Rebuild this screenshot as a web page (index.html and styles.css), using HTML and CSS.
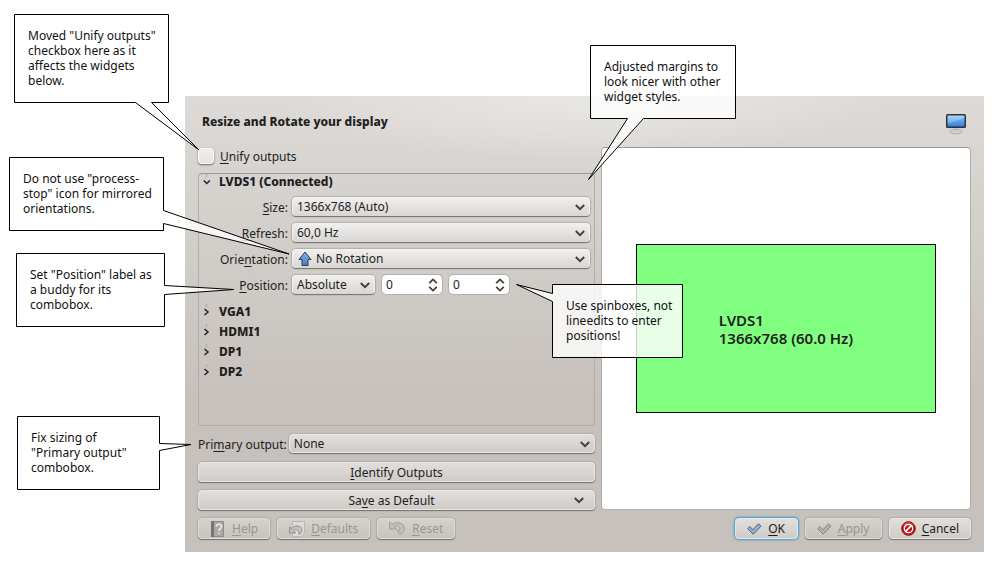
FILE: index.html
```html
<!DOCTYPE html>
<html lang="en">
<head>
<meta charset="utf-8">
<title>Resize and Rotate your display</title>
<link rel="stylesheet" href="styles.css">
</head>
<body>
<svg class="defs" width="0" height="0" aria-hidden="true">
  <defs>
    <symbol id="down" viewBox="0 0 10 7"><path d="M.8 1 5 5.200 9.200 1" fill="none" stroke="#44413f" stroke-width="2"/></symbol>
    <symbol id="spin" viewBox="0 0 10 14"><path d="M1.200 5.200 5 1.400 8.800 5.200M1.200 8.800 5 12.600 8.800 8.800" fill="none" stroke="#44413f" stroke-width="1.800"/></symbol>
    <symbol id="twig" viewBox="0 0 8 14"><path d="M3.500 0V3" stroke="#aaa6a3"/><path d="M1.500 5 5 8 1.500 11" fill="none" stroke="#222" stroke-width="1.500"/></symbol>
    <symbol id="twig-open" viewBox="0 0 8 14"><path d="M3.500 0V3" stroke="#aaa6a3"/><path d="M.8 6.500 3.800 9.500 6.800 6.500" fill="none" stroke="#222" stroke-width="1.500"/></symbol>
    <symbol id="check" viewBox="0 0 15 12"><path d="M2.800 3.600 6 6.800 11.400 .8 14 3.200 6.200 11.200 .7 5.700Z" stroke-linejoin="round"/></symbol>
    <linearGradient id="blue" x1="0" y1="0" x2="0" y2="1"><stop offset="0" stop-color="#8db0dc"/><stop offset="1" stop-color="#4a7ab5"/></linearGradient>
    <linearGradient id="screen" x1="0" y1="0" x2="0" y2="1"><stop offset="0" stop-color="#8cc9fb"/><stop offset="1" stop-color="#2d80dc"/></linearGradient>
    <linearGradient id="red" x1="0" y1="0" x2="0" y2="1"><stop offset="0" stop-color="#d94d4d"/><stop offset=".5" stop-color="#b51414"/><stop offset="1" stop-color="#d51c1c"/></linearGradient>
  </defs>
</svg>

<main class="dialog">
  <header class="head">
    <h1>Resize and Rotate your display</h1>
    <svg class="monitor" width="22" height="22" viewBox="0 0 22 22" aria-hidden="true">
      <ellipse cx="11" cy="18.500" rx="6.500" ry="2.300" fill="#d4d2d0" stroke="#b1aeab"/>
      <path d="M9 15h4v3H9z" fill="#c3c0bd"/>
      <rect x="1" y="1" width="20" height="14" rx="1.500" fill="#303030"/>
      <rect x="2.500" y="2.500" width="17" height="11" fill="url(#screen)"/>
      <path d="M2.500 2.500h17v2L2.500 11z" fill="#fff" opacity=".22"/>
    </svg>
  </header>

  <div class="columns">
    <section class="settings">
      <label class="unify"><input type="checkbox"><span><u>U</u>nify outputs</span></label>

      <div class="outputs">
        <button class="node" type="button"><svg width="8" height="14"><use href="#twig-open"/></svg>LVDS1 (Connected)</button>
        <div class="form">
          <label for="size"><u>S</u>ize:</label>
          <div class="combo"><select id="size"><option>1366x768 (Auto)</option></select><svg width="10" height="7"><use href="#down"/></svg></div>
          <label for="refresh"><u>R</u>efresh:</label>
          <div class="combo"><select id="refresh"><option>60,0 Hz</option></select><svg width="10" height="7"><use href="#down"/></svg></div>
          <label for="orientation">Orie<u>n</u>tation:</label>
          <div class="combo with-icon">
            <svg class="up" width="14" height="16" viewBox="0 0 14 16"><path d="M7 1 13 8.500H10V14.500H4V8.500H1Z" fill="url(#blue)" stroke="#1f3f6b" stroke-linejoin="round"/></svg>
            <select id="orientation"><option>No Rotation</option></select><svg width="10" height="7"><use href="#down"/></svg>
          </div>
          <label for="position"><u>P</u>osition:</label>
          <div class="position">
            <div class="combo"><select id="position"><option>Absolute</option></select><svg width="10" height="7"><use href="#down"/></svg></div>
            <div class="spinbox"><input type="number" value="0" aria-label="X"><svg width="10" height="14"><use href="#spin"/></svg></div>
            <div class="spinbox"><input type="number" value="0" aria-label="Y"><svg width="10" height="14"><use href="#spin"/></svg></div>
          </div>
        </div>
        <button class="node" type="button"><svg width="8" height="14"><use href="#twig"/></svg>VGA1</button>
        <button class="node" type="button"><svg width="8" height="14"><use href="#twig"/></svg>HDMI1</button>
        <button class="node" type="button"><svg width="8" height="14"><use href="#twig"/></svg>DP1</button>
        <button class="node" type="button"><svg width="8" height="14"><use href="#twig"/></svg>DP2</button>
      </div>

      <div class="primary">
        <label for="primary">Pri<u>m</u>ary output:</label>
        <div class="combo"><select id="primary"><option>None</option></select><svg width="10" height="7"><use href="#down"/></svg></div>
      </div>
      <button class="wide" type="button"><span><u>I</u>dentify Outputs</span></button>
      <button class="wide menu" type="button"><span>Sa<u>v</u>e as Default</span><svg width="10" height="7"><use href="#down"/></svg></button>
    </section>

    <section class="preview">
      <div class="screen"><p>LVDS1<br>1366x768 (60.0 Hz)</p></div>
    </section>
  </div>

  <footer class="actions">
    <button type="button" disabled>
      <svg width="16" height="16" viewBox="0 0 16 16"><path d="M1.500 .5h12v15h-12z" fill="#aaa8a4" stroke="#8d8a87"/><path d="M1 0h3v16H1z" fill="#777572"/><path d="M6.500 5.500C6.500 2.500 11.500 2.500 11.500 5.500 11.500 7.500 9 7.500 9 10M9 11.500V13" fill="none" stroke="#ecebe8" stroke-width="1.600"/></svg>
      <span><u>H</u>elp</span></button>
    <button type="button" disabled>
      <svg width="16" height="16" viewBox="0 0 16 16"><path d="M3.500 .5h12v11l-3 4h-9z" fill="#dedcd9" stroke="#bbb8b4"/><path d="M.6 6v6h6L4.600 10C7 7.500 10.500 8.500 10 13.500 14.500 11 13.500 5.500 9 5 6.500 4.700 4.500 5.600 2.800 7.800Z" fill="#c5c3bf" stroke="#8f8c88" stroke-linejoin="round"/></svg>
      <span><u>D</u>efaults</span></button>
    <button type="button" disabled>
      <svg width="17" height="16" viewBox="0 0 17 16"><path d="M.6 1v7h7L5.400 5.900C8.500 3.500 12 5.500 10.500 9.500L8 9.500 11 13.500C17 11 16.500 3.500 11 2 7.500 1.200 5 2 3 3.600Z" fill="#c3c0bc" stroke="#a19e9a" stroke-linejoin="round"/></svg>
      <span><u>R</u>eset</span></button>
    <button class="ok" type="button"><svg width="15" height="12" fill="#93b3d6" stroke="#4a607c"><use href="#check"/></svg><span><u>O</u>K</span></button>
    <button type="button" disabled><svg width="15" height="12" fill="#b3b1ae" stroke="#858380"><use href="#check"/></svg><span><u>A</u>pply</span></button>
    <button type="button">
      <svg width="15" height="15" viewBox="0 0 15 15"><circle cx="7.500" cy="7.500" r="6.800" fill="url(#red)" stroke="#8c0808"/><circle cx="7.500" cy="7.500" r="4.200" fill="none" stroke="#fff" stroke-width="1.300"/><path d="M4.600 10.400 10.400 4.600" stroke="#fff" stroke-width="1.500"/></svg>
      <span><u>C</u>ancel</span></button>
  </footer>
</main>

<aside class="note unify-note">
  <svg width="156" height="90"><path d="M.5 .5H154.500V88.500H137.500L185 136 121.500 88.500H.5Z"/></svg>
  <p>Moved "Unify outputs"<br>checkbox here as it<br>affects the widgets<br>below.</p>
</aside>
<aside class="note orientation-note">
  <svg width="156" height="75"><path d="M.5 .5H154.500V53.500L280 97 154.500 66.500V73.500H.5Z"/></svg>
  <p>Do not use "process-<br>stop" icon for mirrored<br>orientations.</p>
</aside>
<aside class="note position-note">
  <svg width="150" height="75"><path d="M.5 .5H148.500V32.500L218 36.500 148.500 41.500V73.500H.5Z"/></svg>
  <p>Set "Position" label as<br>a buddy for its<br>combobox.</p>
</aside>
<aside class="note primary-note">
  <svg width="144" height="75"><path d="M.5 .5H142.500V27.500L174 28.500 142.500 34.500V73.500H.5Z"/></svg>
  <p>Fix sizing of<br>"Primary output"<br>combobox.</p>
</aside>
<aside class="note margins-note">
  <svg width="147" height="75"><path d="M.5 .5H145.500V73.500H53.500L-1.500 134.500 37.500 73.500H.5Z"/></svg>
  <p>Adjusted margins to<br>look nicer with other<br>widget styles.</p>
</aside>
<aside class="note spin-note">
  <svg width="132" height="75"><path d="M.5 .5H130.500V73.500H.5V17.500L-35.500 .5 .5 9.500Z"/></svg>
  <p>Use spinboxes, not<br>lineedits to enter<br>positions!</p>
</aside>
</body>
</html>
```
FILE: styles.css
```css
* { box-sizing: border-box; }

body {
  position: relative;
  display: flex;
  flex-direction: column;
  min-height: 100vh;
  margin: 0;
  padding: 96px 12px 15px 185px;
  background: #fff;
  color: #221e1e;
  font: 12px/15px "Noto Sans", "Open Sans", sans-serif;
}

.defs { position: absolute; }

u { text-underline-offset: 2px; text-decoration-thickness: 1px; }

button, input, select { font: inherit; color: inherit; }

.dialog {
  flex: 1;
  display: flex;
  flex-direction: column;
  padding: 0 13px 13px;
  background:
    radial-gradient(ellipse 300px 64px at 50% 0, #e9e7e5, transparent),
    linear-gradient(#dddad7, #c6c1bc 300px);
}

.head {
  display: flex;
  align-items: center;
  justify-content: space-between;
  height: 51px;
  padding: 0 4px;
}

h1 { margin: 0; font-size: 12px; font-weight: 800; }

.monitor { margin-top: 4px; }

.columns {
  flex: 1;
  display: grid;
  grid-template-columns: 397fr 370fr;
  gap: 6px;
}

.settings { display: flex; flex-direction: column; gap: 8px; }

.unify { display: flex; align-items: center; gap: 6px; height: 18px; }

.unify input {
  appearance: none;
  width: 16px;
  height: 16px;
  margin: 0;
  border: 1px solid #fafafa;
  border-radius: 4px;
  background: linear-gradient(#f0efee, #e6e4e2);
  box-shadow: 0 1px 2px #6b6764;
}

.outputs {
  flex: 1;
  display: flex;
  flex-direction: column;
  padding: 0 4px;
  border: 1px solid #b2adaa;
  border-top-color: #9d9996;
  border-radius: 4px;
}

.node {
  display: flex;
  align-items: center;
  height: 20px;
  padding: 0;
  border: 0;
  background: none;
  font-weight: 800;
}

.node:first-child { height: 14px; }
.node svg { flex: none; margin-right: 8px; }

.form {
  display: grid;
  grid-template-columns: 85px 1fr;
  gap: 6px 4px;
  padding: 9px 0 6px;
}

.form > label { align-self: center; text-align: right; white-space: nowrap; }

.combo { position: relative; height: 20px; }

.combo select, .wide, .actions button {
  appearance: none;
  border: 1px solid #f4f3f2;
  border-bottom-color: #d9d6d4;
  border-radius: 4px;
  background: linear-gradient(#f0efed, #dad7d4);
  box-shadow: 0 1px 1px #77726f, 0 0 1px 1px #b5b0ac;
}

.combo select {
  display: block;
  width: 100%;
  height: 19px;
  padding: 0 20px 0 4px;
}

.combo > svg { position: absolute; right: 5px; top: 7px; pointer-events: none; }
.combo > .up { left: 6px; right: auto; top: 2px; }
.with-icon select { padding-left: 23px; }

.position { display: grid; grid-template-columns: 83px 60px 60px; gap: 7px; }

.spinbox { position: relative; height: 20px; }

.spinbox input {
  appearance: textfield;
  display: block;
  width: 100%;
  height: 19px;
  padding: 0 3px;
  border: 1px solid #fff;
  border-radius: 4px;
  background: #fff;
  box-shadow: 0 0 0 1px #b5b0ad;
}

.spinbox input::-webkit-inner-spin-button { display: none; }
.spinbox svg { position: absolute; right: 4px; top: 3px; pointer-events: none; }

.primary { display: flex; align-items: center; gap: 2px; }
.primary label { white-space: nowrap; }
.primary .combo { flex: 1; }

.primary select, .wide, .actions button { background: linear-gradient(#e1dedb, #cfccc8); border-color: #e9e7e5; }

.wide {
  display: flex;
  align-items: center;
  justify-content: center;
  height: 20px;
  padding: 0 10px;
}

.wide.menu span { flex: 1; }

.preview {
  display: flex;
  align-items: center;
  justify-content: center;
  border: 1px solid #b2adaa;
  border-top-color: #9d9996;
  border-radius: 4px;
  background: #fff;
}

.screen {
  display: flex;
  align-items: center;
  justify-content: center;
  width: 300px;
  aspect-ratio: 300 / 169;
  border: 1px solid #000;
  background: #80ff80;
}

.screen p { margin: 0; font-size: 15px; font-weight: 600; line-height: 18px; }

.actions { display: flex; gap: 7px; padding-top: 8px; }

.actions button {
  display: flex;
  align-items: center;
  justify-content: center;
  gap: 6px;
  height: 21px;
  min-width: 77px;
  padding: 0 11px;
}

.actions button:first-child { min-width: 72px; }

.actions button:disabled { background: linear-gradient(#d5d2ce, #c7c4be); border-color: #dedbd8; color: #999591; }

.actions .ok {
  min-width: 63px;
  margin-left: auto;
  box-shadow: 0 0 2px 1px #2f9bd3;
}

.note { position: absolute; color: #111; }
.note svg { display: block; overflow: visible; }
.note path { fill: rgba(255, 255, 255, .8); stroke: #000; }
.note p { position: absolute; left: 14px; top: 14px; margin: 0; white-space: nowrap; }

.unify-note { left: 14px; top: 14px; }
.orientation-note { left: 9px; top: 157px; }
.position-note { left: 16px; top: 253px; }
.primary-note { left: 17px; top: 416px; }
.margins-note { left: 590px; top: 45px; }
.spin-note { left: 552px; top: 284px; }
```
